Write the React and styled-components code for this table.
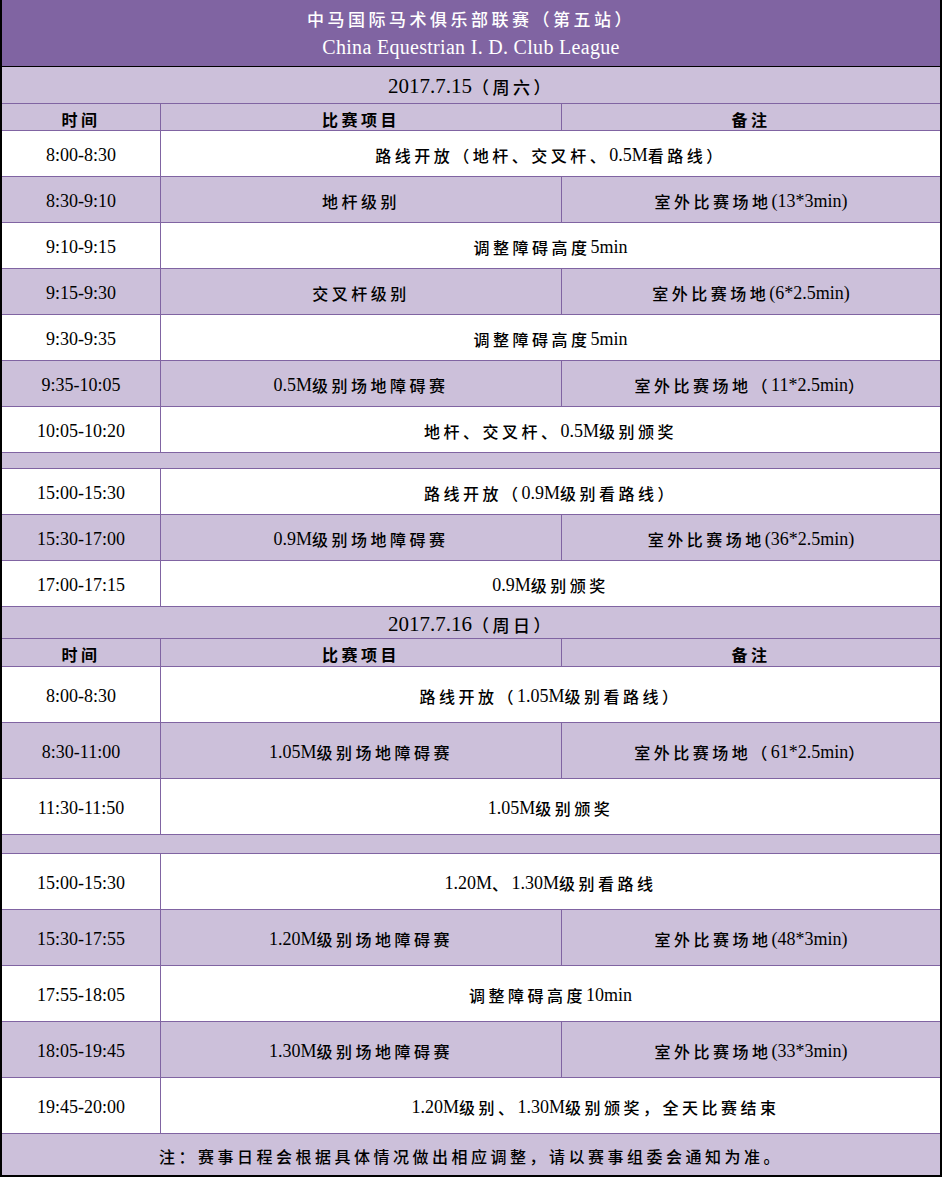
import React from 'react';
import styled, { createGlobalStyle } from 'styled-components';

const PURPLE = '#8064A2';
const LAV = '#CCC0DA';

const GlobalStyle = createGlobalStyle`
  html, body { margin: 0; padding: 0; background: #fff; }
  body { font-family: "Liberation Serif", "Noto Sans CJK SC", serif; }
`;

const Sheet = styled.div`
  width: 942px;
  box-sizing: border-box;
  border-left: 2px solid #000;
  border-right: 2px solid #000;
  border-bottom: 2px solid #000;
  font-family: "Liberation Serif", "Noto Sans CJK SC", serif;
  color: #000;
`;

const Banner = styled.header`
  height: 67px;
  box-sizing: border-box;
  background: ${PURPLE};
  border-bottom: 1px solid #000;
  color: #fff;
  display: flex;
  flex-direction: column;
  align-items: center;
  justify-content: center;
`;

const BannerLine = styled.div`
  height: 28px;
  line-height: 28px;
  font-size: ${p => p.$size || 18}px;
  letter-spacing: ${p => p.$ls || 0}px;
  white-space: nowrap;
`;

const Row = styled.div`
  display: grid;
  grid-template-columns: 159px 401px 1fr;
  height: ${p => p.$h}px;
  box-sizing: border-box;
  border-bottom: ${p => (p.$last ? 'none' : `1px solid ${PURPLE}`)};
  background: ${p => (p.$shade ? LAV : '#fff')};
`;

const Cell = styled.div`
  grid-column: span ${p => p.$span || 1};
  display: flex;
  align-items: center;
  justify-content: center;
  box-sizing: border-box;
  padding-top: 3px;
  padding-left: ${p => p.$shift || 0}px;
  border-right: 1px solid ${PURPLE};
  &:last-child { border-right: none; }
  font-size: ${p => p.$size || 18}px;
  font-weight: ${p => (p.$bold ? 700 : 400)};
  white-space: nowrap;
`;

const Han = styled.span`
  font-family: "Noto Sans CJK SC", sans-serif;
  font-size: ${p => p.$size || 16}px;
  font-weight: ${p => (p.$bold ? 700 : 500)};
  letter-spacing: 3.5px;
`;

const CJK = /[\u3000-\u303f\u4e00-\u9fff\uff00-\uffef]/;
const CJK_RUN = /([\u3000-\u303f\u4e00-\u9fff\uff00-\uffef]+)/;

function Txt({ children, bold, size }) {
  return String(children)
    .split(CJK_RUN)
    .filter(Boolean)
    .map((t, i) =>
      CJK.test(t) ? (
        <Han key={i} $bold={bold} $size={size}>{t}</Han>
      ) : (
        <span key={i}>{t}</span>
      )
    );
}

const day1 = [
  { t: '8:00-8:30', a: '路线开放（地杆、交叉杆、0.5M看路线）' },
  { t: '8:30-9:10', a: '地杆级别', b: '室外比赛场地(13*3min)' },
  { t: '9:10-9:15', a: '调整障碍高度 5min' },
  { t: '9:15-9:30', a: '交叉杆级别', b: '室外比赛场地(6*2.5min)' },
  { t: '9:30-9:35', a: '调整障碍高度 5min' },
  { t: '9:35-10:05', a: '0.5M级别场地障碍赛', b: '室外比赛场地（11*2.5min）' },
  { t: '10:05-10:20', a: '地杆、交叉杆、0.5M级别颁奖' },
  { spacer: 16 },
  { t: '15:00-15:30', a: '路线开放（0.9M级别看路线）' },
  { t: '15:30-17:00', a: '0.9M级别场地障碍赛', b: '室外比赛场地(36*2.5min)' },
  { t: '17:00-17:15', a: '0.9M级别颁奖' },
];

const day2 = [
  { t: '8:00-8:30', a: '路线开放（1.05M级别看路线）' },
  { t: '8:30-11:00', a: '1.05M级别场地障碍赛', b: '室外比赛场地（61*2.5min）' },
  { t: '11:30-11:50', a: '1.05M级别颁奖' },
  { spacer: 19 },
  { t: '15:00-15:30', a: '1.20M、1.30M级别看路线' },
  { t: '15:30-17:55', a: '1.20M级别场地障碍赛', b: '室外比赛场地(48*3min)' },
  { t: '17:55-18:05', a: '调整障碍高度 10min' },
  { t: '18:05-19:45', a: '1.30M级别场地障碍赛', b: '室外比赛场地(33*3min)' },
  { t: '19:45-20:00', a: '1.20M级别、1.30M级别颁奖，全天比赛结束', shift: 90 },
];

function Day({ date, dateH, headH, rowH, rows }) {
  return (
    <>
      <Row $h={dateH} $shade>
        <Cell $span={3} $size={21}><Txt size={17}>{date}</Txt></Cell>
      </Row>
      <Row $h={headH} $shade>
        <Cell $size={17}><Txt bold>时间</Txt></Cell>
        <Cell $size={17}><Txt bold>比赛项目</Txt></Cell>
        <Cell $size={17}><Txt bold>备注</Txt></Cell>
      </Row>
      {(() => {
        let shade = false;
        return rows.map((r, i) => {
          if (r.spacer) {
            shade = false;
            return (
              <Row key={i} $h={r.spacer} $shade>
                <Cell $span={3} />
              </Row>
            );
          }
          const s = shade;
          shade = !shade;
          return (
            <Row key={i} $h={rowH} $shade={s}>
              <Cell>{r.t}</Cell>
              {r.b ? (
                <>
                  <Cell><Txt>{r.a}</Txt></Cell>
                  <Cell><Txt>{r.b}</Txt></Cell>
                </>
              ) : (
                <Cell $span={2} $shift={r.shift}><Txt>{r.a}</Txt></Cell>
              )}
            </Row>
          );
        });
      })()}
    </>
  );
}

export default function App() {
  return (
    <>
      <GlobalStyle />
      <Sheet>
        <Banner>
          <BannerLine><Txt size={17}>中马国际马术俱乐部联赛（第五站）</Txt></BannerLine>
          <BannerLine $size={20} $ls={0.3}>China Equestrian I. D. Club League</BannerLine>
        </Banner>
        <Day date="2017.7.15（周六）" dateH={37} headH={27} rowH={46} rows={day1} />
        <Day date="2017.7.16（周日）" dateH={32} headH={28} rowH={56} rows={day2} />
        <Row $h={41} $shade $last>
          <Cell $span={3}><Txt>注：赛事日程会根据具体情况做出相应调整，请以赛事组委会通知为准。</Txt></Cell>
        </Row>
      </Sheet>
    </>
  );
}
